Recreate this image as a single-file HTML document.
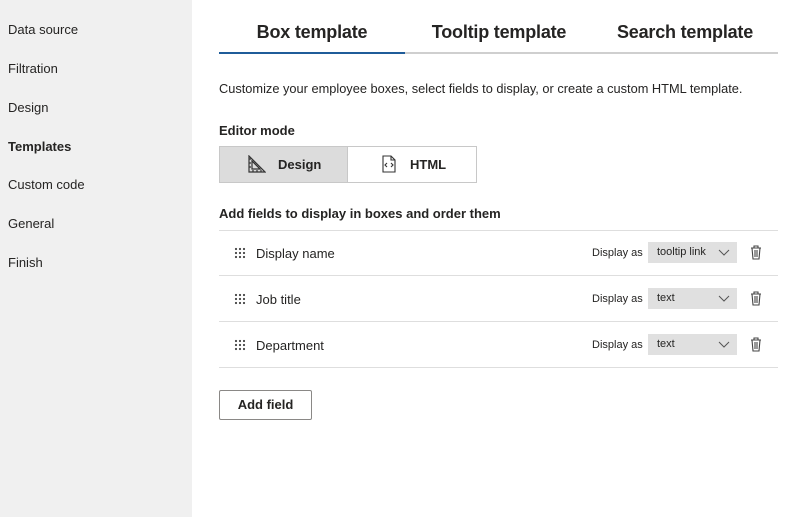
<!DOCTYPE html>
<html><head><meta charset="utf-8"><style>
*{margin:0;padding:0;box-sizing:border-box}
body{width:800px;height:517px;position:relative;font-family:"Liberation Sans",sans-serif;color:#252423;background:#fff;overflow:hidden}
.side{position:absolute;left:0;top:0;width:192px;height:517px;background:#f0f0f0}
.side div{position:absolute;left:8px;font-size:13px;line-height:16px}
.a{position:absolute}
.tab{position:absolute;top:22px;font-size:18px;font-weight:bold;color:#252423;transform:translateX(-50%);white-space:nowrap;letter-spacing:-0.2px}
.line{position:absolute;left:219px;width:559px;height:1px;background:#dedede}
.row{position:absolute;left:219px;width:559px;height:20px}
.dots{position:absolute;left:15px;top:4px;width:12px;height:12px}
.rt{position:absolute;left:37px;top:3px;font-size:13px}
.da{position:absolute;left:373px;top:4px;font-size:11px}
.sel{position:absolute;left:429px;top:-1px;width:89px;height:21px;background:#e0e0e0;font-size:11px;padding:4px 0 0 9px}
.sel svg{position:absolute;right:7px;top:7px}
.tr{position:absolute;left:531px;top:2px}
</style></head><body>
<div class="side">
<div style="top:22px">Data source</div>
<div style="top:61px">Filtration</div>
<div style="top:100px">Design</div>
<div style="top:139px;font-weight:bold">Templates</div>
<div style="top:177px">Custom code</div>
<div style="top:216px">General</div>
<div style="top:255px">Finish</div>
</div>
<div class="tab" style="left:312px">Box template</div>
<div class="tab" style="left:499px">Tooltip template</div>
<div class="tab" style="left:685px">Search template</div>
<div class="a" style="left:219px;top:52px;width:559px;height:2px;background:#cfcfcf"></div>
<div class="a" style="left:219px;top:52px;width:186px;height:2px;background:#1f5c99"></div>
<div class="a" style="left:219px;top:81px;font-size:12.8px">Customize your employee boxes, select fields to display, or create a custom HTML template.</div>
<div class="a" style="left:219px;top:123px;font-size:13px;font-weight:bold">Editor mode</div>
<div class="a" style="left:219px;top:146px;width:258px;height:37px;border:1px solid #c8c8c8;background:#fff"></div>
<div class="a" style="left:220px;top:147px;width:128px;height:35px;background:#dcdcdc;border-right:1px solid #c8c8c8"></div>
<svg class="a" style="left:248px;top:155px" width="18" height="18" viewBox="0 0 18 18" fill="none" stroke="#333" stroke-width="1.2"><path d="M1 1v16h16L1 1z M4 6v8h8z M1 4h2M1 8h2M1 12h2M5 17v-2M9 17v-2M13 17v-2"/></svg>
<div class="a" style="left:278px;top:157px;font-size:13px;font-weight:bold">Design</div>
<svg class="a" style="left:381px;top:155px" width="16" height="18" viewBox="0 0 16 18" fill="none" stroke="#333" stroke-width="1.1"><path d="M2 1h8l4 4v12H2z M10 1v4h4 M6 8l-2 2 2 2 M10 8l2 2-2 2"/></svg>
<div class="a" style="left:410px;top:157px;font-size:13px;font-weight:bold">HTML</div>
<div class="a" style="left:219px;top:206px;font-size:13px;font-weight:bold">Add fields to display in boxes and order them</div>
<div class="line" style="top:230px"></div>
<div class="line" style="top:275px"></div>
<div class="line" style="top:321px"></div>
<div class="line" style="top:367px"></div>
<svg width="0" height="0" style="position:absolute"><defs>
<g id="d" fill="#444"><circle cx="2" cy="2" r="1.1"/><circle cx="6" cy="2" r="1.1"/><circle cx="10" cy="2" r="1.1"/><circle cx="2" cy="6" r="1.1"/><circle cx="6" cy="6" r="1.1"/><circle cx="10" cy="6" r="1.1"/><circle cx="2" cy="10" r="1.1"/><circle cx="6" cy="10" r="1.1"/><circle cx="10" cy="10" r="1.1"/></g>
<g id="c" fill="none" stroke="#555" stroke-width="1"><path d="M1 1l5 5 5-5"/></g>
<g id="t" fill="none" stroke="#444" stroke-width="1.1"><path d="M1 3h10M4 3V1h4v2M2 3l1 11h6l1-11M5 5v7M7 5v7"/></g>
</defs></svg>
<div class="row" style="top:243px"><svg class="dots" viewBox="0 0 12 12"><use href="#d"/></svg><div class="rt">Display name</div><div class="da">Display as</div><div class="sel">tooltip link<svg width="12" height="8"><use href="#c"/></svg></div><svg class="tr" width="12" height="15"><use href="#t"/></svg></div>
<div class="row" style="top:289px"><svg class="dots" viewBox="0 0 12 12"><use href="#d"/></svg><div class="rt">Job title</div><div class="da">Display as</div><div class="sel">text<svg width="12" height="8"><use href="#c"/></svg></div><svg class="tr" width="12" height="15"><use href="#t"/></svg></div>
<div class="row" style="top:335px"><svg class="dots" viewBox="0 0 12 12"><use href="#d"/></svg><div class="rt">Department</div><div class="da">Display as</div><div class="sel">text<svg width="12" height="8"><use href="#c"/></svg></div><svg class="tr" width="12" height="15"><use href="#t"/></svg></div>
<div class="a" style="left:219px;top:390px;width:93px;height:30px;border:1px solid #8a8886;border-radius:2px;font-size:13px;font-weight:bold;text-align:center;line-height:28px">Add field</div>
</body></html>
